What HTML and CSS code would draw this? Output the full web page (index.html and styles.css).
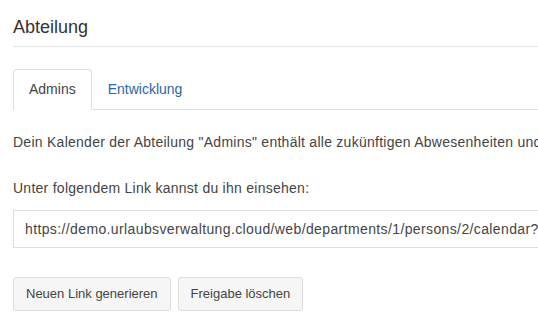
FILE: index.html
```html
<!DOCTYPE html>
<html lang="de">
<head>
    <meta charset="UTF-8">
    <meta name="viewport" content="width=device-width, initial-scale=1.0">
    <title>Abteilung</title>
    <link rel="stylesheet" href="styles.css">
</head>
<body>
    <div class="seite">
        <h2 class="titel">Abteilung</h2>
        <ul class="reiter">
            <li class="reiter-item aktiv">Admins</li>
            <li class="reiter-item"><a href="#">Entwicklung</a></li>
        </ul>
        <p class="text-oben">Dein Kalender der Abteilung "Admins" enthält alle zukünftigen Abwesenheiten und kann in andere Kalender eingebunden werden.</p>
        <p class="text-link">Unter folgendem Link kannst du ihn einsehen:</p>
        <input type="text" class="link-feld" readonly value="https://demo.urlaubsverwaltung.cloud/web/departments/1/persons/2/calendar?secret=a1b2c3d4e5">
        <div class="knoepfe">
            <button class="knopf">Neuen Link generieren</button>
            <button class="knopf">Freigabe löschen</button>
        </div>
    </div>
</body>
</html>
```

FILE: styles.css
```css
body{
    margin: 0;
    font-family: "Liberation Sans", Arial, sans-serif;
    font-size: 14px;
    line-height: 20px;
    color: #444;
    overflow: hidden;
    background: #fff;
}
.seite{
    width: 1000px;
    padding: 0 13px;
}
.titel{
    margin: 0;
    padding: 15px 0 7px 0;
    font-size: 18px;
    line-height: 24px;
    font-weight: normal;
    color: #333;
    border-bottom: 1px solid #e5e5e5;
}
.reiter{
    display: flex;
    list-style: none;
    margin: 22px 0 0 0;
    padding: 0;
    border-bottom: 1px solid #ddd;
}
.reiter-item{
    padding: 9px 15px 10px 15px;
    border: 1px solid transparent;
    border-radius: 4px 4px 0 0;
    margin-bottom: -1px;
}
.reiter-item.aktiv{
    border-color: #ddd;
    border-bottom-color: #fff;
    background: #fff;
}
.reiter-item a{
    color: #2b66a6;
    text-decoration: none;
}
.text-oben{
    margin: 22px 0 0 0;
    white-space: nowrap;
    letter-spacing: 0.26px;
}
.text-link{
    margin: 26px 0 12px 0;
    letter-spacing: 0.26px;
}
.link-feld{
    display: block;
    box-sizing: border-box;
    width: 100%;
    height: 38px;
    padding: 8px 11px;
    font-family: inherit;
    font-size: 14px;
    line-height: 20px;
    letter-spacing: 0.38px;
    color: #444;
    border: 1px solid #ddd;
    border-radius: 0;
    outline: none;
}
.knoepfe{
    display: flex;
    gap: 7px;
    margin-top: 29px;
}
.knopf{
    padding: 6px 12px;
    font-family: inherit;
    font-size: 13px;
    line-height: 20px;
    color: #444;
    background: #f6f6f6;
    border: 1px solid #ddd;
    border-radius: 3px;
}
```
